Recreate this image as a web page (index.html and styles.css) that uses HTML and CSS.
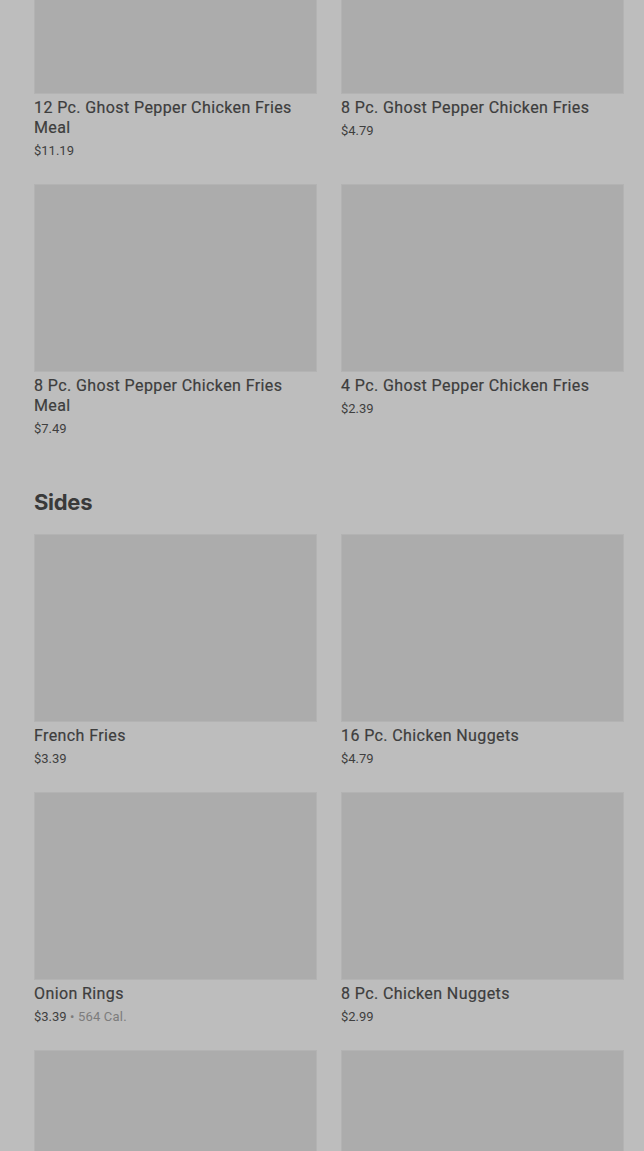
FILE: index.html
```html
<!DOCTYPE html>
<html lang="en">
<head>
  <meta charset="UTF-8">
  <meta name="viewport" content="width=device-width, initial-scale=1">
  <title>Menu</title>
  <link rel="stylesheet" href="styles.css">
</head>
<body>

  <!-- Menu page, dimmed behind an overlay -->
  <main class="menu">

    <section class="menu-section first">
      <div class="item-grid">
        <div class="item">
          <div class="item-image"></div>
          <div class="item-name">12 Pc. Ghost Pepper Chicken Fries Meal</div>
          <div class="item-meta">$11.19</div>
        </div>
        <div class="item">
          <div class="item-image"></div>
          <div class="item-name">8 Pc. Ghost Pepper Chicken Fries</div>
          <div class="item-meta">$4.79</div>
        </div>
        <div class="item">
          <div class="item-image"></div>
          <div class="item-name">8 Pc. Ghost Pepper Chicken Fries Meal</div>
          <div class="item-meta">$7.49</div>
        </div>
        <div class="item">
          <div class="item-image"></div>
          <div class="item-name">4 Pc. Ghost Pepper Chicken Fries</div>
          <div class="item-meta">$2.39</div>
        </div>
      </div>
    </section>

    <section class="menu-section">
      <h2 class="section-title">Sides</h2>
      <div class="item-grid">
        <div class="item">
          <div class="item-image"></div>
          <div class="item-name">French Fries</div>
          <div class="item-meta">$3.39</div>
        </div>
        <div class="item">
          <div class="item-image"></div>
          <div class="item-name">16 Pc. Chicken Nuggets</div>
          <div class="item-meta">$4.79</div>
        </div>
        <div class="item">
          <div class="item-image"></div>
          <div class="item-name">Onion Rings</div>
          <div class="item-meta">$3.39 <span class="cal">&bull; 564 Cal.</span></div>
        </div>
        <div class="item">
          <div class="item-image"></div>
          <div class="item-name">8 Pc. Chicken Nuggets</div>
          <div class="item-meta">$2.99</div>
        </div>
        <!-- next row, only the tops of the pictures are in view -->
        <div class="item">
          <div class="item-image"></div>
        </div>
        <div class="item">
          <div class="item-image"></div>
        </div>
      </div>
    </section>

  </main>

</body>
</html>
```

FILE: styles.css
```css
/* Page is scrolled and dimmed, so everything reads in grey */
body {
  margin: 0;
  padding: 0;
  height: 1151px;
  overflow: hidden;
  background-color: #bdbdbd;
  font-family: Roboto, "Liberation Sans", sans-serif;
  color: #3d3d3d;
}

.menu {
  padding: 0 20px 0 34px;
  margin-top: -94px;  /* first row of images is cut off by the scroll */
}

.menu-section {
  padding-bottom: 26px;
}

/* Section heading */
.section-title {
  margin: 23px 0 18px;
  font-family: Inter, "Liberation Sans", sans-serif;
  font-size: 22px;
  line-height: 28px;
  font-weight: 700;
  letter-spacing: -0.3px;
  color: #3a3a3a;
}

/* Two-column grid of items */
.item-grid {
  display: grid;
  grid-template-columns: 1fr 1fr;
  column-gap: 24px;
  row-gap: 23px;
}

.item {
  display: flex;
  flex-direction: column;
}

.item-image {
  height: 186px;
  background: #acacac;
  border: 1px solid #b3b3b3;
}

.item-name {
  margin-top: 4px;
  font-size: 16px;
  line-height: 20px;
  font-weight: 400;
  letter-spacing: 0.4px;
  color: #3d3d3d;
  -webkit-text-stroke: 0.2px #3d3d3d;
}

.item-meta {
  margin-top: 3px;
  font-size: 13px;
  line-height: 20px;
  color: #3f3f3f;
}

.cal {
  color: #7c7c7c;
  letter-spacing: 0.2px;
}
```
